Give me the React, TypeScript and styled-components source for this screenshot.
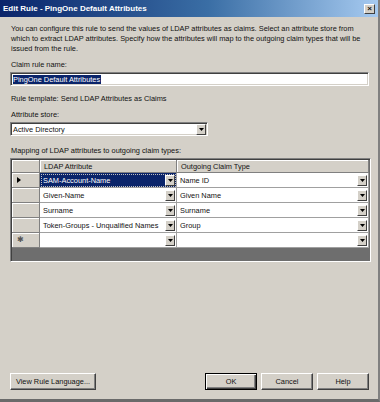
import React from "react";
import styled, { createGlobalStyle } from "styled-components";

const Global = createGlobalStyle`
  html, body { margin: 0; padding: 0; background: #d4d0c8; }
  * { box-sizing: border-box; }
`;

const FONT = `"Liberation Sans", Arial, sans-serif`;

const Window = styled.div`
  width: 380px;
  height: 402px;
  background: #d4d0c8;
  display: flex;
  flex-direction: column;
  font-family: ${FONT};
  font-size: 7.4px;
  color: #111;
  border-right: 2px solid #808080;
  border-bottom: 3px solid #6a6a6a;
  overflow: hidden;
`;

const TitleBar = styled.div`
  height: 17px;
  flex: none;
  display: flex;
  align-items: center;
  justify-content: space-between;
  padding: 0 3px 0 3px;
  background: linear-gradient(to right, #0a246a 0%, #3a6ea5 55%, #a6caf0 100%);
`;

const Title = styled.span`
  color: #fff;
  font-weight: bold;
  font-size: 8px;
`;

const CloseButton = styled.div`
  width: 11px;
  height: 10px;
  background: #d4d0c8;
  border: 1px solid;
  border-color: #fff #404040 #404040 #fff;
  display: flex;
  align-items: center;
  justify-content: center;
  font-size: 8px;
  font-weight: bold;
  line-height: 1;
`;

const Body = styled.div`
  flex: 1;
  display: flex;
  flex-direction: column;
  padding: 7px 9px 9px 10px;
`;

const Description = styled.p`
  margin: 0 0 0 1px;
  line-height: 10px;
  white-space: pre-line;
`;

const Label = styled.div<{ $top: number }>`
  margin: ${(p) => p.$top}px 0 0 1px;
  line-height: 10px;
`;

const Sunken = styled.div<{ $width?: string }>`
  width: ${(p) => p.$width ?? "100%"};
  height: 14px;
  background: #fff;
  border: 1px solid;
  border-color: #808080 #fff #fff #808080;
  box-shadow: inset 1px 1px 0 #404040, inset -1px -1px 0 #d4d0c8;
  display: flex;
  align-items: center;
  padding: 0 2px;
`;

const TextField = styled(Sunken)`
  margin-top: 2px;
`;

const Highlight = styled.span`
  background: #0a246a;
  color: #fff;
  line-height: 9px;
  padding: 0 1px 0 0;
`;

const SelectBox = styled(Sunken)`
  margin-top: 2px;
  justify-content: space-between;
  padding-right: 1px;
`;

const DropButton = styled.div`
  width: 10px;
  height: 11px;
  flex: none;
  background: #d4d0c8;
  border: 1px solid;
  border-color: #fff #404040 #404040 #fff;
  display: flex;
  align-items: center;
  justify-content: center;
`;

const Arrow = () => (
  <svg width="5" height="3" viewBox="0 0 5 3">
    <path d="M0 0H5L2.5 3Z" fill="#000" />
  </svg>
);

const Grid = styled.div`
  margin-top: 2px;
  width: 361px;
  border: 1px solid;
  border-color: #808080 #fff #fff #808080;
  box-shadow: inset 1px 1px 0 #404040;
  background: #6e6e6e;
  height: 104px;
  display: grid;
  grid-template-columns: 28px 137px 1fr;
  grid-template-rows: 13px repeat(5, 15px);
  align-content: start;
  padding: 1px 1px 0 1px;
`;

const HeaderCell = styled.div`
  background: #d4d0c8;
  border-right: 1px solid #808080;
  border-bottom: 1px solid #808080;
  box-shadow: inset 1px 1px 0 #fff;
  display: flex;
  align-items: center;
  padding-left: 4px;
`;

const RowHeader = styled.div`
  background: #d4d0c8;
  border-right: 1px solid #808080;
  border-bottom: 1px solid #808080;
  box-shadow: inset 1px 1px 0 #fff;
  display: flex;
  align-items: center;
  padding-left: 5px;
`;

const Cell = styled.div<{ $selected?: boolean }>`
  background: ${(p) => (p.$selected ? "#0a246a" : "#fff")};
  color: ${(p) => (p.$selected ? "#fff" : "#111")};
  border-right: 1px solid #a0a0a0;
  border-bottom: 1px solid #a0a0a0;
  display: flex;
  align-items: center;
  justify-content: space-between;
  padding: 0 1px 0 3px;
  ${(p) => (p.$selected ? "outline: 1px dotted #c0c0c0; outline-offset: -2px;" : "")}
`;

const ButtonRow = styled.div`
  margin-top: auto;
  display: flex;
  align-items: center;
`;

const Button = styled.button<{ $width: number }>`
  width: ${(p) => p.$width}px;
  height: 17px;
  background: #d4d0c8;
  font-family: ${FONT};
  font-size: 7.4px;
  color: #111;
  border: 1px solid;
  border-color: #fff #404040 #404040 #fff;
  box-shadow: inset -1px -1px 0 #808080;
  padding: 0;
  margin-left: 4px;
  &:first-child { margin-left: 0; }
`;

const DefaultButton = styled(Button)`
  border: 1px solid #000;
  box-shadow: inset 1px 1px 0 #fff, inset -1px -1px 0 #404040, inset -2px -2px 0 #808080;
`;

const Spacer = styled.div`
  flex: 1;
`;

const rows = [
  { ldap: "SAM-Account-Name", out: "Name ID", marker: "arrow" },
  { ldap: "Given-Name", out: "Given Name" },
  { ldap: "Surname", out: "Surname" },
  { ldap: "Token-Groups - Unqualified Names", out: "Group" },
  { ldap: "", out: "", marker: "new" },
];

const RowArrow = () => (
  <svg width="4" height="6" viewBox="0 0 4 6">
    <path d="M0 0L4 3L0 6Z" fill="#000" />
  </svg>
);

const Star = styled.span`
  color: #555;
  font-size: 8px;
  line-height: 1;
`;

export default function App() {
  return (
    <>
      <Global />
      <Window>
        <TitleBar>
          <Title>Edit Rule - PingOne Default Attributes</Title>
          <CloseButton>×</CloseButton>
        </TitleBar>
        <Body>
          <Description>
            {"You can configure this rule to send the values of LDAP attributes as claims. Select an attribute store from\nwhich to extract LDAP attributes. Specify how the attributes will map to the outgoing claim types that will be\nissued from the rule."}
          </Description>
          <Label $top={6}>Claim rule name:</Label>
          <TextField>
            <Highlight>PingOne Default Attributes</Highlight>
          </TextField>
          <Label $top={8}>Rule template: Send LDAP Attributes as Claims</Label>
          <Label $top={6}>Attribute store:</Label>
          <SelectBox $width="198px">
            <span>Active Directory</span>
            <DropButton>
              <Arrow />
            </DropButton>
          </SelectBox>
          <Label $top={10}>Mapping of LDAP attributes to outgoing claim types:</Label>
          <Grid>
            <HeaderCell />
            <HeaderCell>LDAP Attribute</HeaderCell>
            <HeaderCell>Outgoing Claim Type</HeaderCell>
            {rows.map((r, i) => (
              <React.Fragment key={i}>
                <RowHeader>
                  {r.marker === "arrow" && <RowArrow />}
                  {r.marker === "new" && <Star>✱</Star>}
                </RowHeader>
                <Cell $selected={i === 0}>
                  <span>{r.ldap}</span>
                  <DropButton>
                    <Arrow />
                  </DropButton>
                </Cell>
                <Cell>
                  <span>{r.out}</span>
                  <DropButton>
                    <Arrow />
                  </DropButton>
                </Cell>
              </React.Fragment>
            ))}
          </Grid>
          <Spacer />
          <ButtonRow>
            <Button $width={86}>View Rule Language...</Button>
            <Spacer />
            <DefaultButton $width={52}>OK</DefaultButton>
            <Button $width={52}>Cancel</Button>
            <Button $width={52}>Help</Button>
          </ButtonRow>
        </Body>
      </Window>
    </>
  );
}
